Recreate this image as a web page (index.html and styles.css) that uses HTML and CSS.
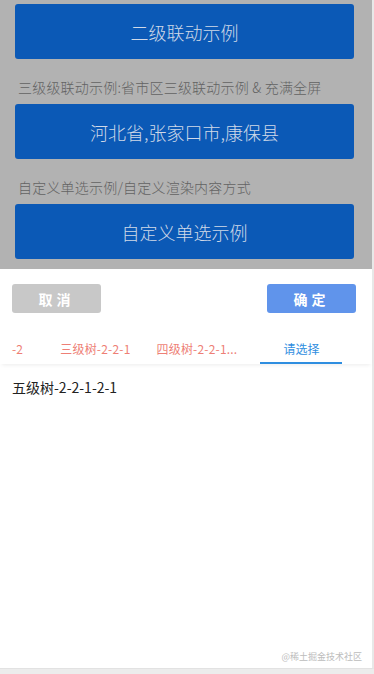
FILE: index.html
```html
<!DOCTYPE html>
<html>
  <head>
    <meta charset="UTF-8">
    <meta name="viewport" content="width=device-width, initial-scale=1.0">
    <title>级联选择示例</title>
    <link rel="stylesheet" href="styles.css">
  </head>
  <body>
    <div id="page">
        <div id="demo">
            <div class="demo-btn">二级联动示例</div>
            <div class="demo-label">三级级联动示例:省市区三级联动示例 &amp; 充满全屏</div>
            <div class="demo-btn">河北省,张家口市,康保县</div>
            <div class="demo-label">自定义单选示例/自定义渲染内容方式</div>
            <div class="demo-btn">自定义单选示例</div>
        </div>

        <div id="picker">
            <div class="picker-head">
                <span class="btn cancel">取消</span>
                <span class="btn ok">确定</span>
            </div>
            <ul class="tabs">
                <li class="done first">-2</li>
                <li class="done">三级树-2-2-1</li>
                <li class="done">四级树-2-2-1...</li>
                <li class="active">请选择</li>
            </ul>
            <ul class="options">
                <li>五级树-2-2-1-2-1</li>
            </ul>
            <div class="mark">@稀土掘金技术社区</div>
        </div>
    </div>
  </body>
</html>
```

FILE: styles.css
```css
html, body {
    margin: 0;
    padding: 0;
    height: 100%;
}

body {
    background-color: #ececec;
    font-family: "Noto Sans CJK SC", "Noto Sans", sans-serif;
}

#page {
    width: 372px;
    height: 668px;
    border-right: 2px solid #e8e8e8;
    border-bottom: 1px solid #e2e2e2;
    display: flex;
    flex-direction: column;
    background: #fff;
}

#demo {
    background-color: #b2b2b2;
    padding: 4px 18px 9px 15px;
    height: 256px;
}

.demo-btn {
    height: 55px;
    background-color: #0b59b6;
    border-radius: 3px;
    color: #d0d9e8;
    font-size: 18px;
    font-weight: 300;
    display: flex;
    align-items: center;
    justify-content: center;
}

.demo-label {
    color: #636363;
    font-size: 14px;
    font-weight: 300;
    height: 27px;
    line-height: 20px;
    padding: 18px 0 0 3px;
    letter-spacing: 0.2px;
    white-space: nowrap;
}

#picker {
    flex: 1;
    display: flex;
    flex-direction: column;
    position: relative;
}

.picker-head {
    display: flex;
    justify-content: space-between;
    padding: 15px 16px 0 12px;
}

.btn {
    width: 89px;
    height: 29px;
    border-radius: 3px;
    color: #fff;
    font-size: 14px;
    font-weight: bold;
    letter-spacing: 4px;
    display: flex;
    align-items: center;
    justify-content: center;
}

.cancel {
    background: #c8c8c8;
}

.ok {
    background: #6094eb;
}

ul {
    list-style: none;
    margin: 0;
    padding: 0;
}

.tabs {
    display: flex;
    margin-top: 23px;
    height: 28px;
    font-size: 12px;
    box-shadow: 0 3px 4px -2px rgba(0, 0, 0, 0.08);
}

.tabs li {
    height: 26px;
    line-height: 26px;
    white-space: nowrap;
}

.tabs li.done {
    color: #ee7f76;
    padding: 0 13px;
    letter-spacing: 0.2px;
}

.tabs li.first {
    padding: 0 24px 0 12px;
}

.tabs li.active {
    color: #2f8ee0;
    margin-left: 10px;
    width: 82px;
    text-align: center;
    border-bottom: 2px solid #2f8ee0;
}

.options {
    padding: 13px 12px;
    font-size: 14px;
    color: #222;
}

.mark {
    position: absolute;
    right: 10px;
    bottom: 5px;
    font-size: 9px;
    color: #bcbcbc;
}
```
